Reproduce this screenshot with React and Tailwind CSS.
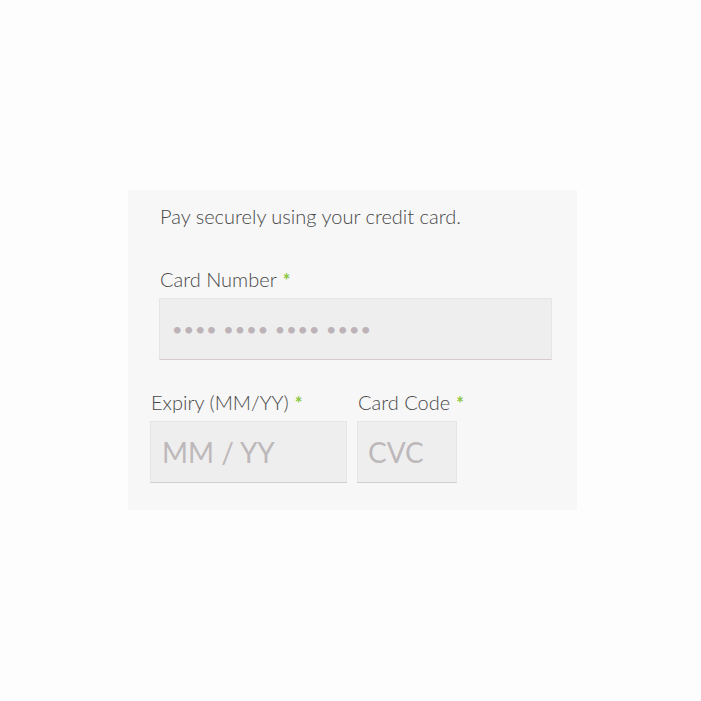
import React from "react";

const Req = () => (
  <span className="ml-[6px] text-[#8cc63f] font-bold text-[18px] leading-none">*</span>
);

export default function App() {
  return (
    <div
      className="min-h-[701px] bg-[#fdfdfd] pt-[190px] pl-[128px]"
      style={{ fontFamily: "Lato, 'Open Sans', sans-serif" }}
    >
      <div className="w-[449px] h-[320px] bg-[#f7f7f7] text-[#555]">
        {/* intro */}
        <p className="pl-[32px] pt-[13px] text-[20px] leading-[26px] font-light text-[#484848]">
          Pay securely using your credit card.
        </p>

        {/* card number */}
        <div className="pl-[31px] pr-[25px] mt-[37px]">
          <label className="block h-[26px] pl-[1px] text-[20px] leading-[26px] font-light text-[#484848]">
            Card Number
            <Req />
          </label>
          <div className="mt-[6px] h-[62px] bg-[#eeeeee] border border-[#e6e6e6] border-b-[#d8c9cc] flex items-center pl-[12px]">
            <span className="text-[18px] tracking-[1px] text-[#bcb2b7] leading-none">
              •••• •••• •••• ••••
            </span>
          </div>
        </div>

        {/* expiry + cvc */}
        <div className="pl-[22px] mt-[29px] flex gap-[10px]">
          <div className="w-[197px]">
            <label className="block h-[26px] pl-[1px] text-[20px] leading-[26px] font-light text-[#484848] whitespace-nowrap">
              Expiry (MM/YY)
              <Req />
            </label>
            <div className="mt-[6px] h-[62px] bg-[#eeeeee] border border-[#e6e6e6] border-b-[#cfcfcf] flex items-center pl-[11px]">
              <span className="text-[28px] text-[#bdb8ba] leading-none">MM / YY</span>
            </div>
          </div>
          <div className="w-[100px]">
            <label className="block h-[26px] pl-[1px] text-[20px] leading-[26px] font-light text-[#484848] whitespace-nowrap">
              Card Code
              <Req />
            </label>
            <div className="mt-[6px] h-[62px] bg-[#eeeeee] border border-[#e6e6e6] border-b-[#cfcfcf] flex items-center pl-[10px]">
              <span className="text-[28px] text-[#bdb8ba] leading-none">CVC</span>
            </div>
          </div>
        </div>
      </div>
    </div>
  );
}
